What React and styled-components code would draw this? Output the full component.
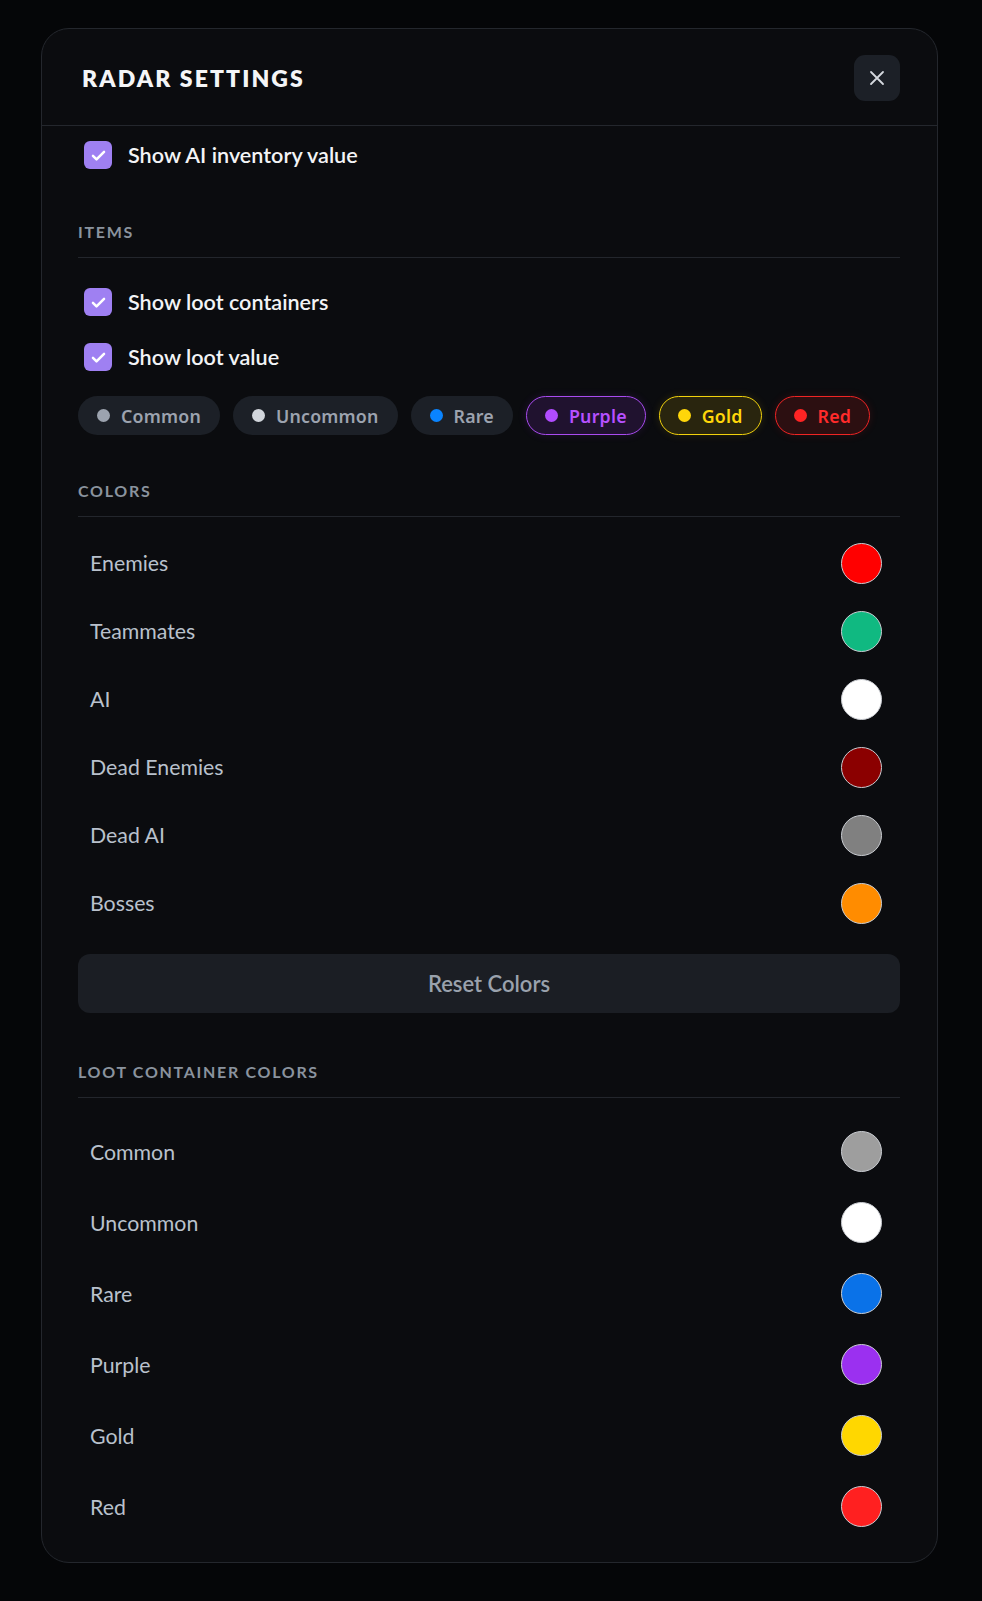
import React from "react";
import styled, { createGlobalStyle } from "styled-components";

const GlobalStyle = createGlobalStyle`
  html, body {
    margin: 0;
    padding: 0;
    background: #050608;
  }
  body {
    font-family: Lato, "Noto Sans", sans-serif;
    -webkit-font-smoothing: antialiased;
  }
`;

const lootFilters = [
  { label: "Common", dot: "#9ca3af", active: false },
  { label: "Uncommon", dot: "#d1d5db", active: false },
  { label: "Rare", dot: "#0a84ff", active: false },
  { label: "Purple", dot: "#b14cff", active: true, border: "#a94bf0", text: "#b650ff", bg: "rgba(140, 50, 220, 0.16)" },
  { label: "Gold", dot: "#ffd60a", active: true, border: "#f2d20c", text: "#ffd60a", bg: "rgba(200, 170, 10, 0.16)" },
  { label: "Red", dot: "#ff2424", active: true, border: "#f02424", text: "#ff2b2b", bg: "rgba(220, 30, 30, 0.16)" },
];

const playerColors = [
  { label: "Enemies", color: "#ff0000" },
  { label: "Teammates", color: "#10b981" },
  { label: "AI", color: "#ffffff" },
  { label: "Dead Enemies", color: "#8b0000" },
  { label: "Dead AI", color: "#808080" },
  { label: "Bosses", color: "#ff8c00" },
];

const containerColors = [
  { label: "Common", color: "#9e9e9e" },
  { label: "Uncommon", color: "#ffffff" },
  { label: "Rare", color: "#0a72e8" },
  { label: "Purple", color: "#9b30f0" },
  { label: "Gold", color: "#ffd700" },
  { label: "Red", color: "#ff2020" },
];

function CheckIcon() {
  return (
    <svg width="19" height="19" viewBox="0 0 24 24" fill="none">
      <path d="M5 12.5l4.5 4.5L19 7.5" stroke="#fff" strokeWidth="3.2" strokeLinecap="round" strokeLinejoin="round" />
    </svg>
  );
}

function CloseIcon() {
  return (
    <svg width="24" height="24" viewBox="0 0 24 24" fill="none">
      <path d="M18 6L6 18M6 6l12 12" stroke="#d4d8de" strokeWidth="1.8" strokeLinecap="round" />
    </svg>
  );
}

function Check({ label }) {
  return (
    <CheckRow>
      <CheckBox>
        <CheckIcon />
      </CheckBox>
      <CheckLabel>{label}</CheckLabel>
    </CheckRow>
  );
}

export default function App() {
  return (
    <>
      <GlobalStyle />
      <Page>
        <Modal>
          <Header>
            <Title>RADAR SETTINGS</Title>
            <CloseButton aria-label="Close">
              <CloseIcon />
            </CloseButton>
          </Header>
          <Body>
            <Check label="Show AI inventory value" />

            <SectionTitle $top={53}>ITEMS</SectionTitle>
            <CheckList>
              <Check label="Show loot containers" />
              <Check label="Show loot value" />
            </CheckList>
            <Chips>
              {lootFilters.map((f) => (
                <Chip key={f.label} $active={f.active} $border={f.border} $text={f.text} $bg={f.bg}>
                  <Dot $color={f.dot} />
                  {f.label}
                </Chip>
              ))}
            </Chips>

            <SectionTitle $top={46}>COLORS</SectionTitle>
            <ColorList $top={12}>
              {playerColors.map((c) => (
                <ColorRow key={c.label} $height={68}>
                  <ColorLabel>{c.label}</ColorLabel>
                  <Swatch $color={c.color} />
                </ColorRow>
              ))}
            </ColorList>
            <ResetButton>Reset Colors</ResetButton>

            <SectionTitle $top={49}>LOOT CONTAINER COLORS</SectionTitle>
            <ColorList $top={18}>
              {containerColors.map((c) => (
                <ColorRow key={c.label} $height={71}>
                  <ColorLabel>{c.label}</ColorLabel>
                  <Swatch $color={c.color} />
                </ColorRow>
              ))}
            </ColorList>
          </Body>
        </Modal>
      </Page>
    </>
  );
}

const Page = styled.div`
  min-height: 1601px;
  box-sizing: border-box;
  padding: 28px 44px 39px 41px;
  background: #050608;
`;

const Modal = styled.div`
  box-sizing: border-box;
  width: 897px;
  background: #0b0c0f;
  border: 1px solid #24272d;
  border-radius: 28px;
  overflow: hidden;
`;

const Header = styled.div`
  height: 97px;
  box-sizing: border-box;
  display: flex;
  align-items: center;
  justify-content: space-between;
  padding: 2px 37px 0 40px;
  border-bottom: 1px solid #24272d;
`;

const Title = styled.h2`
  margin: 0;
  font-family: Lato, sans-serif;
  font-size: 23px;
  font-weight: 800;
  letter-spacing: 2.1px;
  color: #f4f5f7;
`;

const CloseButton = styled.button`
  width: 46px;
  height: 46px;
  border: none;
  border-radius: 11px;
  background: #1c2027;
  display: flex;
  align-items: center;
  justify-content: center;
  padding: 0;
  cursor: pointer;
`;

const Body = styled.div`
  padding: 15px 37px 20px 36px;
`;

const CheckList = styled.div`
  display: flex;
  flex-direction: column;
  gap: 27px;
  margin-top: 30px;
`;

const CheckRow = styled.label`
  display: flex;
  align-items: center;
  gap: 16px;
  height: 28px;
  padding-left: 6px;
`;

const CheckBox = styled.span`
  width: 28px;
  height: 28px;
  border-radius: 6px;
  background: #9f80f2;
  display: flex;
  align-items: center;
  justify-content: center;
  flex-shrink: 0;
`;

const CheckLabel = styled.span`
  font-size: 21.6px;
  font-weight: 600;
  color: #f3f4f6;
`;

const SectionTitle = styled.div`
  margin-top: ${(p) => p.$top}px;
  padding-bottom: 15px;
  border-bottom: 1px solid #23262c;
  font-size: 16px;
  line-height: 20px;
  font-weight: 700;
  letter-spacing: 1.7px;
  color: #8a939e;
`;

const Chips = styled.div`
  display: flex;
  flex-wrap: wrap;
  gap: 13px;
  margin-top: 25px;
`;

const Chip = styled.button`
  box-sizing: border-box;
  height: 39px;
  display: flex;
  align-items: center;
  gap: 11px;
  padding: 0 18px;
  border-radius: 20px;
  border: ${(p) => (p.$active ? `1.5px solid ${p.$border}` : "1.5px solid transparent")};
  background: ${(p) => (p.$active ? p.$bg : "#1c2027")};
  color: ${(p) => (p.$active ? p.$text : "#9ca3af")};
  box-shadow: ${(p) => (p.$active ? `0 0 8px ${p.$bg}` : "none")};
  font-family: "Noto Sans", sans-serif;
  font-size: 17.8px;
  font-weight: 600;
  letter-spacing: 0.2px;
  cursor: pointer;
`;

const Dot = styled.span`
  width: 13px;
  height: 13px;
  border-radius: 50%;
  background: ${(p) => p.$color};
  flex-shrink: 0;
`;

const ColorList = styled.div`
  margin-top: ${(p) => p.$top}px;
  display: flex;
  flex-direction: column;
`;

const ColorRow = styled.div`
  height: ${(p) => p.$height}px;
  display: flex;
  align-items: center;
  justify-content: space-between;
  padding: 0 18px 0 12px;
`;

const ColorLabel = styled.span`
  font-size: 21.3px;
  color: #b9c1cc;
`;

const Swatch = styled.span`
  box-sizing: border-box;
  width: 41px;
  height: 41px;
  border-radius: 50%;
  background: ${(p) => p.$color};
  border: 1.5px solid #c9ccd1;
`;

const ResetButton = styled.button`
  display: block;
  width: 100%;
  height: 59px;
  margin-top: 17px;
  border: none;
  border-radius: 12px;
  background: #1b1e24;
  color: #9aa2ad;
  font-family: Lato, sans-serif;
  font-size: 22px;
  font-weight: 600;
  cursor: pointer;
`;
